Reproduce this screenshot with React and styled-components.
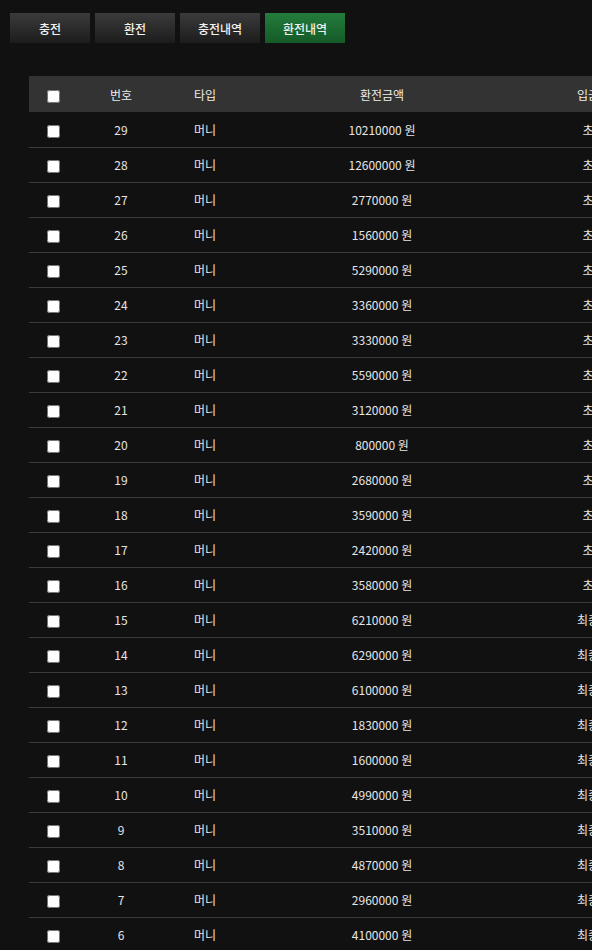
import React from 'react'
import styled, { createGlobalStyle } from 'styled-components'

const GlobalStyle = createGlobalStyle`
  html, body {
    margin: 0;
    padding: 0;
    background: #111111;
    overflow: hidden;
  }
  body {
    font-family: "Noto Sans CJK KR", "Noto Sans", sans-serif;
    color: #e6e6e6;
  }
`

const Page = styled.div`
  padding: 13px 0 0 10px;
  width: 900px;
`

const Tabs = styled.div`
  display: flex;
  gap: 5px;
`

const Tab = styled.button`
  width: 80px;
  height: 30px;
  border: none;
  padding: 0;
  font-family: inherit;
  font-size: 12px;
  font-weight: 500;
  color: #f2f2f2;
  background: ${p => p.$active
    ? 'linear-gradient(to bottom, #237c3c, #145a27)'
    : 'linear-gradient(to bottom, #3b3b3b, #1c1c1c)'};
  cursor: pointer;
`

const Table = styled.table`
  margin: 33px 0 0 19px;
  border-collapse: collapse;
  table-layout: fixed;
  width: 810px;
  font-size: 12px;
`

const HeadRow = styled.tr`
  background: #333333;
  height: 36px;
`

const Th = styled.th`
  font-weight: 400;
  color: #eeeeee;
  text-align: center;
  padding: 0;
  vertical-align: middle;
`

const Row = styled.tr`
  height: 35px;
  border-bottom: 1px solid #3a3a3a;
`

const Td = styled.td`
  text-align: center;
  padding: 0;
  color: #e6e6e6;
  vertical-align: middle;
`

const Check = styled.input.attrs({ type: 'checkbox' })`
  width: 13px;
  height: 13px;
  margin: 0;
  vertical-align: middle;
`

const rows = [
  [29, 10210000], [28, 12600000], [27, 2770000], [26, 1560000],
  [25, 5290000], [24, 3360000], [23, 3330000], [22, 5590000],
  [21, 3120000], [20, 800000], [19, 2680000], [18, 3590000],
  [17, 2420000], [16, 3580000], [15, 6210000], [14, 6290000],
  [13, 6100000], [12, 1830000], [11, 1600000], [10, 4990000],
  [9, 3510000], [8, 4870000], [7, 2960000], [6, 4100000],
]

const tabs = ['충전', '환전', '충전내역', '환전내역']

const App = () => {
  return (
    <Page>
      <GlobalStyle />
      <Tabs>
        {tabs.map((t, i) => (
          <Tab key={t} $active={i === 3}>{t}</Tab>
        ))}
      </Tabs>
      <Table>
        <colgroup>
          <col style={{ width: 48 }} />
          <col style={{ width: 88 }} />
          <col style={{ width: 80 }} />
          <col style={{ width: 274 }} />
          <col style={{ width: 160 }} />
          <col style={{ width: 160 }} />
        </colgroup>
        <thead>
          <HeadRow>
            <Th><Check /></Th>
            <Th>번호</Th>
            <Th>타입</Th>
            <Th>환전금액</Th>
            <Th>입금상태</Th>
            <Th>신청일</Th>
          </HeadRow>
        </thead>
        <tbody>
          {rows.map(([no, amount]) => (
            <Row key={no}>
              <Td><Check /></Td>
              <Td>{no}</Td>
              <Td>머니</Td>
              <Td>{amount} 원</Td>
              <Td>{no >= 16 ? '초기화' : '최종승인'}</Td>
              <Td>2024-01-01</Td>
            </Row>
          ))}
        </tbody>
      </Table>
    </Page>
  )
}

export default App
